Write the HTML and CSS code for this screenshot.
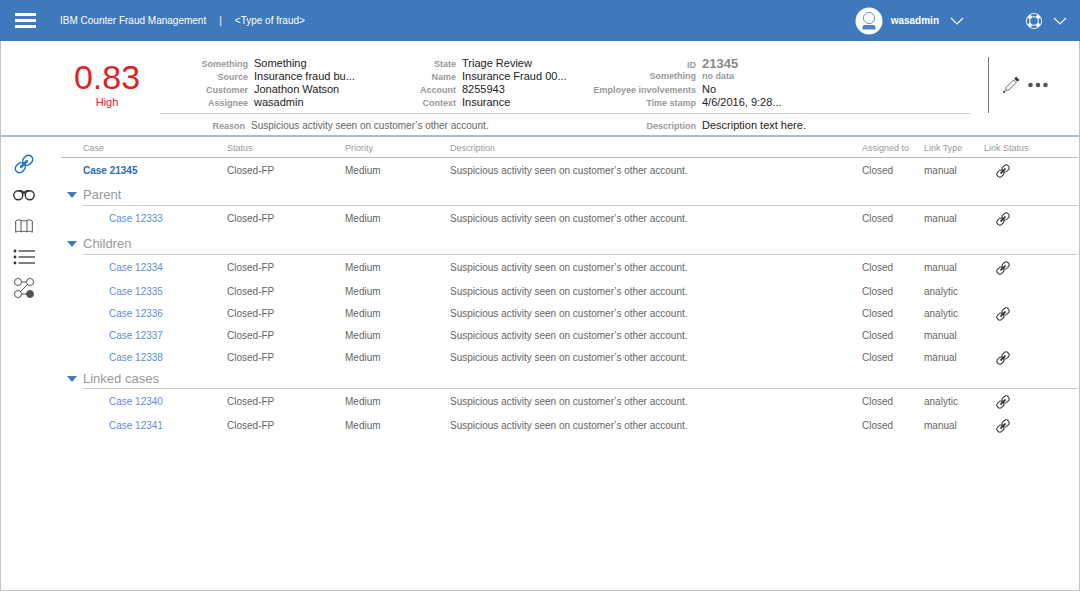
FILE: index.html
```html
<!DOCTYPE html>
<html lang="en">
<head>
    <meta charset="UTF-8">
    <meta name="viewport" content="width=device-width, initial-scale=1">
    <title>IBM Counter Fraud Management</title>
    <link rel="stylesheet" href="styles.css">
</head>
<body>
<!-- shared icons -->
<svg class="defs" width="0" height="0" aria-hidden="true">
    <symbol id="link" viewBox="0 0 20 20">
        <g fill="none" stroke="currentColor" transform="rotate(-45 10 10)">
            <rect x="-0.5" y="5.800" width="10.500" height="8.400" rx="4.200"/>
            <rect x="10" y="5.800" width="10.500" height="8.400" rx="4.200"/>
            <path d="M6 10h8" stroke-width="2.600" stroke-linecap="round"/>
        </g>
    </symbol>
    <symbol id="chevron" viewBox="0 0 14 8">
        <path d="M1 1l6 6 6-6" fill="none" stroke="currentColor" stroke-width="1.1"/>
    </symbol>
</svg>

<header class="topbar">
    <button class="menu" aria-label="Menu"><span></span><span></span><span></span></button>
    <span class="product">IBM Counter Fraud Management</span>
    <span class="divider">|</span>
    <span class="fraud-type">&lt;Type of fraud&gt;</span>
    <button class="user">
        <svg class="avatar" width="28" height="28" viewBox="0 0 28 28">
            <circle cx="14" cy="14" r="13.5" fill="#fff"/>
            <circle cx="14" cy="11" r="5.6" fill="none" stroke="#3f78bb" stroke-width="0.8"/>
            <path d="M7.500 22.500v-2.200q0-2.300 2.300-2.300h8.400q2.300 0 2.300 2.300v2.200z" fill="#4f83c1"/>
        </svg>
        <span>wasadmin</span>
        <svg class="chevron" width="14" height="8"><use href="#chevron"/></svg>
    </button>
    <button class="help" aria-label="Help">
        <svg width="18" height="18" viewBox="0 0 18 18">
            <g fill="none" stroke="#fff">
                <circle cx="9" cy="9" r="7.600" stroke-width="0.9"/>
                <circle cx="9" cy="9" r="4.300"/>
                <path d="M3.900 3.900l1.900 1.900M14.100 3.900l-1.900 1.900M3.900 14.100l1.900-1.900M14.100 14.100l-1.900-1.900" stroke-width="3.800"/>
            </g>
        </svg>
        <svg class="chevron" width="14" height="8"><use href="#chevron"/></svg>
    </button>
</header>

<div class="frame">
    <section class="summary">
        <div class="score">
            <strong>0.83</strong>
            <span>High</span>
        </div>
        <div class="details">
            <div class="facts">
                <dl>
                    <dt>Something</dt><dd>Something</dd>
                    <dt>Source</dt><dd>Insurance fraud bu...</dd>
                    <dt>Customer</dt><dd>Jonathon Watson</dd>
                    <dt>Assignee</dt><dd>wasadmin</dd>
                </dl>
                <dl>
                    <dt>State</dt><dd>Triage Review</dd>
                    <dt>Name</dt><dd>Insurance Fraud 00...</dd>
                    <dt>Account</dt><dd>8255943</dd>
                    <dt>Context</dt><dd>Insurance</dd>
                </dl>
                <dl class="wide">
                    <dt>ID</dt><dd class="case-id">21345</dd>
                    <dt>Something</dt><dd class="empty">no data</dd>
                    <dt>Employee involvements</dt><dd>No</dd>
                    <dt>Time stamp</dt><dd>4/6/2016, 9:28...</dd>
                </dl>
            </div>
            <div class="notes">
                <dl class="reason">
                    <dt>Reason</dt><dd>Suspicious activity seen on customer’s other account.</dd>
                </dl>
                <dl class="wide">
                    <dt>Description</dt><dd>Description text here.</dd>
                </dl>
            </div>
        </div>
        <div class="actions">
            <button aria-label="Edit">
                <svg width="18" height="18" viewBox="0 0 18 18">
                    <path d="M4.200 11.300L11.600 3.900l2.600 2.600-7.400 7.400-3 .500z" fill="none" stroke="#555" stroke-width="0.9"/>
                    <path d="M12.200 2.500L14.200.700l3.200 3.200-2 1.900z" fill="#333"/>
                    <path d="M.8 17.200l1.200-3 1.900 1.900z" fill="#333"/>
                </svg>
            </button>
            <button aria-label="More actions">
                <svg width="20" height="6" viewBox="0 0 20 6" fill="#555">
                    <circle cx="2.500" cy="3" r="2.300"/><circle cx="10" cy="3" r="2.300"/><circle cx="17.500" cy="3" r="2.300"/>
                </svg>
            </button>
        </div>
    </section>

    <main class="content">
        <nav class="side">
            <button class="active" aria-label="Linked cases">
                <svg width="20" height="20"><use href="#link"/></svg>
            </button>
            <button aria-label="Investigate">
                <svg width="22" height="12" viewBox="0 0 22 12" fill="none" stroke="#333">
                    <circle cx="5.300" cy="6.300" r="4.500" stroke-width="1.400"/>
                    <circle cx="16.700" cy="6.300" r="4.500" stroke-width="1.400"/>
                    <path d="M5 1.800h3.500l1.500 1.200h2l1.500-1.200H17M9.800 4.500q1.200-1 2.400 0" stroke-width="1.400"/>
                </svg>
            </button>
            <button aria-label="Map">
                <svg width="18" height="14" viewBox="0 0 18 14" fill="none" stroke="#555">
                    <path d="M.7 2v11.300c1.500-1.300 3.500-1.300 5.300-.5 2-.8 4-.8 6 0 1.800-.8 3.800-.8 5.300.5V2c-1.500-1.400-3.500-1.400-5.300-.7-2 .8-4 .8-6 0C4.200.6 2.200.6.700 2zM6 1.300v11.500M12 1.300v11.500"/>
                </svg>
            </button>
            <button aria-label="List">
                <svg width="22" height="16" viewBox="0 0 22 16" stroke="#555">
                    <path d="M5.500 2H22M5.500 8H22M5.500 14H22" stroke-width="1.400"/>
                    <g fill="#333" stroke="none"><circle cx="2" cy="2" r="1.400"/><circle cx="2" cy="8" r="1.400"/><circle cx="2" cy="14" r="1.400"/></g>
                </svg>
            </button>
            <button aria-label="Network">
                <svg width="20" height="20" viewBox="0 0 20 20" fill="none" stroke="#555">
                    <circle cx="4" cy="4" r="3.500"/><circle cx="16" cy="4" r="3.500"/>
                    <circle cx="4" cy="16" r="3.500"/><circle cx="16" cy="16" r="3.500" fill="#555"/>
                    <path d="M7.500 4h5M13.500 6.500l-7 7M7.500 16h5"/>
                </svg>
            </button>
        </nav>

        <table class="cases">
            <colgroup>
                <col class="c-toggle"><col class="c-case"><col class="c-status"><col class="c-priority"><col>
                <col class="c-assigned"><col class="c-type"><col class="c-link">
            </colgroup>
            <thead>
            <tr>
                <td></td>
                <th>Case</th>
                <th>Status</th>
                <th>Priority</th>
                <th>Description</th>
                <th>Assigned to</th>
                <th>Link Type</th>
                <th>Link Status</th>
            </tr>
            </thead>
            <tbody>
            <tr class="current"><td></td><td><a href="#">Case 21345</a></td><td>Closed-FP</td><td>Medium</td><td>Suspicious activity seen on customer’s other account.</td><td>Closed</td><td>manual</td><td><svg class="linked"><use href="#link"/></svg></td></tr>
            </tbody>
            <tbody>
            <tr class="group"><td><button class="toggle" aria-label="Collapse Parent"></button></td><th colspan="7">Parent</th></tr>
            <tr><td></td><td><a href="#">Case 12333</a></td><td>Closed-FP</td><td>Medium</td><td>Suspicious activity seen on customer’s other account.</td><td>Closed</td><td>manual</td><td><svg class="linked"><use href="#link"/></svg></td></tr>
            </tbody>
            <tbody>
            <tr class="group"><td><button class="toggle" aria-label="Collapse Children"></button></td><th colspan="7">Children</th></tr>
            <tr><td></td><td><a href="#">Case 12334</a></td><td>Closed-FP</td><td>Medium</td><td>Suspicious activity seen on customer’s other account.</td><td>Closed</td><td>manual</td><td><svg class="linked"><use href="#link"/></svg></td></tr>
            <tr><td></td><td><a href="#">Case 12335</a></td><td>Closed-FP</td><td>Medium</td><td>Suspicious activity seen on customer’s other account.</td><td>Closed</td><td>analytic</td><td></td></tr>
            <tr><td></td><td><a href="#">Case 12336</a></td><td>Closed-FP</td><td>Medium</td><td>Suspicious activity seen on customer’s other account.</td><td>Closed</td><td>analytic</td><td><svg class="linked"><use href="#link"/></svg></td></tr>
            <tr><td></td><td><a href="#">Case 12337</a></td><td>Closed-FP</td><td>Medium</td><td>Suspicious activity seen on customer’s other account.</td><td>Closed</td><td>manual</td><td></td></tr>
            <tr><td></td><td><a href="#">Case 12338</a></td><td>Closed-FP</td><td>Medium</td><td>Suspicious activity seen on customer’s other account.</td><td>Closed</td><td>manual</td><td><svg class="linked"><use href="#link"/></svg></td></tr>
            </tbody>
            <tbody>
            <tr class="group tight"><td><button class="toggle" aria-label="Collapse Linked cases"></button></td><th colspan="7">Linked cases</th></tr>
            <tr><td></td><td><a href="#">Case 12340</a></td><td>Closed-FP</td><td>Medium</td><td>Suspicious activity seen on customer’s other account.</td><td>Closed</td><td>analytic</td><td><svg class="linked"><use href="#link"/></svg></td></tr>
            <tr><td></td><td><a href="#">Case 12341</a></td><td>Closed-FP</td><td>Medium</td><td>Suspicious activity seen on customer’s other account.</td><td>Closed</td><td>manual</td><td><svg class="linked"><use href="#link"/></svg></td></tr>
            </tbody>
        </table>
    </main>
</div>
</body>
</html>
```
FILE: styles.css
```css
* { box-sizing: border-box; }
body {
    margin: 0;
    min-height: 100vh;
    padding-bottom: 5px;
    display: flex;
    flex-direction: column;
    font-family: "Liberation Sans", Arial, sans-serif;
    font-size: 10px;
    color: #666;
    background-color: #fff;
}
button { border: 0; padding: 0; background: none; font: inherit; color: inherit; cursor: pointer; }
svg { display: block; }
a { text-decoration: none; }
dl, dd { margin: 0; }
.defs { position: absolute; }

/* top bar */
.topbar {
    display: flex;
    align-items: center;
    height: 41px;
    padding: 0 13px 0 15px;
    background-color: #3f78bb;
    color: #fff;
}
.menu { display: flex; flex-direction: column; gap: 3px; width: 21px; margin-right: 24px; }
.menu span { height: 3px; background-color: #fff; }
.divider { margin: 0 13px; }
.user { display: flex; align-items: center; gap: 8px; margin-left: auto; font-weight: bold; }
.user .chevron { margin-left: 3px; }
.help { display: flex; align-items: center; gap: 10px; margin-left: 61px; }

/* case summary */
.frame { flex: 1; border: 1px solid #c4c4c4; border-top: 0; }
.summary { display: flex; height: 96px; border-bottom: 2px solid #a3bedb; }
.score {
    flex: none;
    width: 159px;
    padding: 18px 0 0 52px;
    display: flex;
    flex-direction: column;
    align-items: flex-start;
    color: #dd2127;
}
.score strong, .score span { width: 108px; text-align: center; }
.score strong { font-weight: normal; font-size: 34px; line-height: 36px; }
.score span { font-size: 11px; line-height: 14px; }
.details { flex: 1; padding-top: 16px; line-height: 13px; }
.facts, .notes { display: grid; grid-template-columns: 208px 208px 1fr; }
.facts { padding-bottom: 4px; border-bottom: 1px solid #ccc; }
.notes { grid-template-columns: 416px 1fr; padding-top: 5px; }
.details dl { display: grid; grid-template-columns: 88px 1fr; column-gap: 6px; align-items: baseline; grid-auto-rows: 13px; }
.details dl.wide { grid-template-columns: 120px 1fr; }
.details dl.reason { grid-template-columns: 85px 1fr; }
.details dt { text-align: right; font-size: 9px; font-weight: bold; color: #999; }
.details dd { font-size: 11px; color: #222; white-space: nowrap; }
.details .reason dd { color: #666; font-size: 10px; }
.details .case-id { font-size: 13px; font-weight: bold; color: #888; }
.details .empty { font-size: 9px; font-weight: bold; color: #999; }
.actions {
    display: flex;
    align-items: center;
    gap: 8px;
    height: 56px;
    margin: 16px 31px 0 18px;
    padding-left: 13px;
    border-left: 1px solid #777;
}

/* side icons */
.content { display: flex; align-items: flex-start; }
.side { flex: none; width: 60px; padding: 11px 0 0 10px; }
.side button { display: flex; align-items: center; justify-content: center; width: 26px; height: 31px; }
.side .active { color: #1f74c0; }
.side .active svg { stroke-width: 1.5; }

/* cases */
.cases { flex: 1; width: 100%; table-layout: fixed; border-collapse: separate; border-spacing: 0; margin-right: 1px; }
.cases td, .cases th { padding: 1px 0 0; text-align: left; font-weight: normal; white-space: nowrap; line-height: 14px; }
.cases tr { height: 22px; }
.cases thead tr { height: 21px; }
.cases thead td, .cases thead th { border-bottom: 1px solid #bbb; font-size: 9px; color: #999; }
.cases .current { height: 24px; }
.cases .group { height: 24px; }
.cases .group.tight { height: 21px; }
.cases .group + tr { height: 25px; }
.cases .group th { padding-top: 3px; border-bottom: 1px solid #ccc; font-size: 13px; color: #999; }
.cases .group.tight th { padding-top: 1px; }
.cases a { margin-left: 26px; color: #5f8fd0; }
.cases .current a { margin-left: 0; color: #2f6bbb; font-weight: bold; }
.c-toggle { width: 22px; }
.c-case { width: 144px; }
.c-status { width: 118px; }
.c-priority { width: 105px; }
.c-assigned { width: 62px; }
.c-type { width: 60px; }
.c-link { width: 94px; }
.toggle {
    display: block;
    margin-left: 6px;
    border: 5px solid transparent;
    border-top: 6px solid #3f78bb;
    border-bottom: 0;
}
.linked { width: 14px; height: 14px; margin-left: 12px; color: #333; stroke-width: 1.5; }
```
